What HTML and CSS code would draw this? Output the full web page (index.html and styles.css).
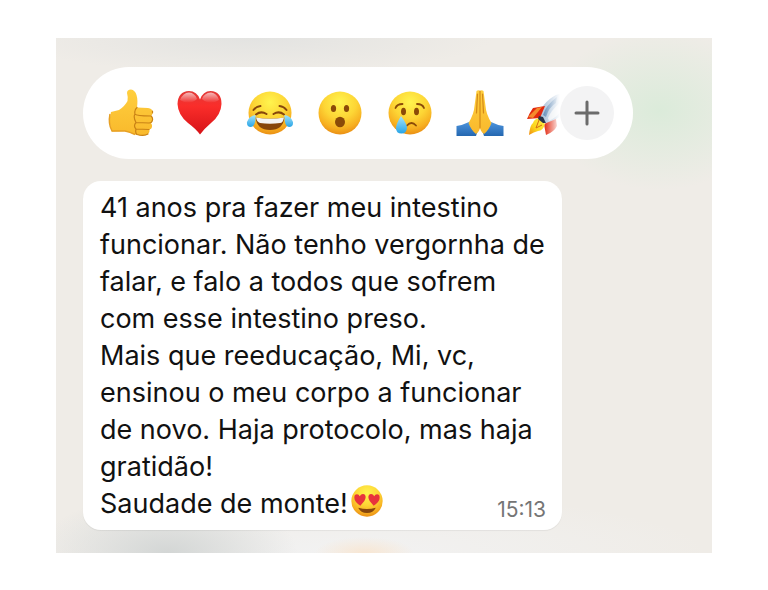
FILE: index.html
```html
<!DOCTYPE html>
<html lang="pt-BR">
<head>
    <meta charset="UTF-8">
    <meta name="viewport" content="width=device-width, initial-scale=1">
    <title>Depoimento</title>
    <link rel="stylesheet" href="styles.css">
</head>
<body>
    <!-- shared gradients -->
    <svg class="defs" width="0" height="0" aria-hidden="true">
        <defs>
            <radialGradient id="face" cx="50%" cy="25%" r="76%">
                <stop offset="0" stop-color="#fff44e"/>
                <stop offset="0.5" stop-color="#fdd535"/>
                <stop offset="0.8" stop-color="#f7b021"/>
                <stop offset="1" stop-color="#e98d14"/>
            </radialGradient>
            <linearGradient id="skin" x1="0" y1="0" x2="0" y2="1">
                <stop offset="0" stop-color="#ffcf3e"/>
                <stop offset="1" stop-color="#f9b92c"/>
            </linearGradient>
            <linearGradient id="red" x1="0" y1="0" x2="0" y2="1">
                <stop offset="0" stop-color="#e23a38"/>
                <stop offset="0.35" stop-color="#fa2d2a"/>
                <stop offset="1" stop-color="#d61318"/>
            </linearGradient>
            <linearGradient id="shine" x1="0" y1="0" x2="0" y2="1">
                <stop offset="0" stop-color="#fff" stop-opacity="0.65"/>
                <stop offset="1" stop-color="#fff" stop-opacity="0"/>
            </linearGradient>
            <linearGradient id="tear" x1="0" y1="0" x2="0" y2="1">
                <stop offset="0" stop-color="#a5e4fb"/>
                <stop offset="1" stop-color="#27a4e6"/>
            </linearGradient>
            <linearGradient id="sleeve" x1="0" y1="0" x2="0" y2="1">
                <stop offset="0" stop-color="#4d94dd"/>
                <stop offset="1" stop-color="#2467b0"/>
            </linearGradient>
            <linearGradient id="flame" x1="1" y1="0" x2="0" y2="1">
                <stop offset="0" stop-color="#fff04a"/>
                <stop offset="0.6" stop-color="#fbd61d"/>
                <stop offset="1" stop-color="#f08a12"/>
            </linearGradient>
        </defs>
    </svg>

    <main class="chat">
        <div class="reactions">
            <div class="reaction-list">
                <button type="button" aria-label="Joinha">
                    <svg viewBox="-2 0 48 48">
                        <path fill="url(#skin)" d="M3 23Q7 22 11 21Q17 17 19.500 12Q20 7 19 4Q19 .5 23 .5Q27 1 28.500 6Q30 11 29 18.500L40 19Q44.500 19.500 44.500 23Q44.500 26 43 27Q45 28.500 44.500 31Q44.500 33 43 34Q44.500 36 44 38Q43.500 40 41.500 40.500Q42 43 40 45Q38 47 33 46.500L27 45.500Q22 43 17 42L4 42.500Q0 34 3 23Z"/>
                        <path fill="none" stroke="#c98216" stroke-width="1.200" stroke-linecap="round" d="M29 18.500Q26 21 27 25Q28 27 43 27M43 27Q45 28.500 44.500 31Q44 34 41 34L28 33.500M27 25Q25 28 28 33.500Q25 37 28 40L41 40.500M28 40Q27 44 29 45.500Q36 47.500 40 45M44.500 22V24"/>
                        <path fill="none" stroke="#e7a025" stroke-width="1.500" d="M2 25Q0 35 4 42L17 42Q22 43 27 45.500"/>
                    </svg>
                </button>
                <button type="button" aria-label="Amei">
                    <svg viewBox="0 0 48 48">
                        <path fill="url(#red)" d="M24 10.500Q27 2 34.500 2Q45.500 2.500 45.500 15Q45 26 35 34Q28 40 24 45.500Q20 40 12 34Q2 26 1.500 15Q2 2.500 13 2Q21 2 24 10.500Z"/>
                        <path fill="url(#shine)" d="M4 11Q7 3.500 13 3.500Q19 4 21 10Q13 17 4 11ZM26 10Q28 4 35 3.500Q41 4 43 11Q34 17 26 10Z"/>
                    </svg>
                </button>
                <button type="button" aria-label="Haha">
                    <svg viewBox="0 0 48 48">
                        <circle cx="24" cy="24" r="21.500" fill="url(#face)"/>
                        <path fill="#87460b" d="M9.500 28.500Q24 31 38.500 28.500Q37 41 24 41Q11 41 9.500 28.500Z"/>
                        <path fill="#f4f4f4" d="M10 28.500Q24 31 38 28.500Q37 34 34 34Q24 35.500 14 34Q11 33 10 28.500Z"/>
                        <path fill="none" stroke="#87460b" stroke-width="2" stroke-linecap="round" d="M10 25.500Q15 21.500 20.500 25M27.500 25Q33 21.500 38 25.500M7.500 21Q10 17.500 14.500 17M33.500 17Q38 17.500 40.500 21"/>
                        <path fill="url(#tear)" d="M9.500 26Q3 27 1 33Q.5 38 5 38Q10 37.500 9.500 26ZM38.500 26Q45 27 47 33Q47.500 38 43 38Q38 37.500 38.500 26Z"/>
                    </svg>
                </button>
                <button type="button" aria-label="Uau">
                    <svg viewBox="0 0 48 48">
                        <circle cx="24" cy="24" r="21.500" fill="url(#face)"/>
                        <g fill="#8b4a08">
                            <ellipse cx="17.500" cy="19.500" rx="2.600" ry="3.500"/>
                            <ellipse cx="30.500" cy="19.500" rx="2.600" ry="3.500"/>
                            <ellipse cx="24" cy="33" rx="5" ry="5.200"/>
                        </g>
                    </svg>
                </button>
                <button type="button" aria-label="Triste">
                    <svg viewBox="0 0 48 48">
                        <circle cx="24" cy="24" r="21.500" fill="url(#face)"/>
                        <g fill="#8b4a08">
                            <ellipse cx="17.500" cy="22.500" rx="2.500" ry="3.800"/>
                            <ellipse cx="30.500" cy="22.500" rx="2.500" ry="3.800"/>
                        </g>
                        <path fill="none" stroke="#8b4a08" stroke-width="1.800" stroke-linecap="round" d="M9.500 19Q11 15 16.500 15M31 15Q36.500 15 38 19M21 36.500Q25.500 31.500 30 36.500"/>
                        <path fill="url(#tear)" d="M15 27Q21 35 21 39Q20.500 44.500 15.500 44.500Q10 44.500 10 39Q10 35 15 27Z"/>
                    </svg>
                </button>
                <button type="button" aria-label="Gratidão">
                    <svg viewBox="0 0 48 48">
                        <path fill="url(#sleeve)" d="M.5 37Q7 36 13 33L22 41L20 47H.5ZM47.500 37Q41 36 35 33L26 41L28 47H47.500Z"/>
                        <path fill="url(#skin)" d="M24 2Q22.500 .5 20.500 2L18.500 17Q18 25 12.500 34Q15 41 20 45Q24 42 24 38Q24 42 28 45Q33 41 35.500 34Q30 25 29.500 17L27.500 2Q25.500 .5 24 2Z"/>
                        <path fill="none" stroke="#d48a18" stroke-width="1.200" stroke-linecap="round" d="M24 2V39M21.500 5L20.500 24M26.500 5L27.500 24"/>
                    </svg>
                </button>
                <button type="button" aria-label="Foguete">
                    <svg viewBox="0 0 48 48">
                        <path fill="#b3c8de" d="M13 28Q15 14 30 6L46 1L42 18Q35 30 20 35Z"/>
                        <path fill="#6d94bd" d="M17 26Q20 16 31 8L30 14Q23 18 20 28Z"/>
                        <path fill="#e9edf1" d="M22 29Q25 21 36 12L35 22Q30 29 23 32Z"/>
                        <path fill="#e2280f" d="M19 17L7 19Q4 23 1 30L14 29ZM30 30L18 35L20 46Q28 43 31 37Z"/>
                        <path fill="#f58a2c" d="M11 19L2 28L7 29L16 18Z"/>
                        <path fill="url(#flame)" d="M13 29L19 35Q17 42 12 42Q8 43 3 46Q4 36 7 34Q8 30 13 29Z"/>
                        <path fill="none" stroke="#d76a12" stroke-width="1" d="M13 31L10 39L16 36"/>
                        <path fill="#293449" d="M13 27L17 28L20 34L17 34L12 30Z"/>
                    </svg>
                </button>
            </div>
            <button type="button" class="more" aria-label="Mais reações">
                <svg viewBox="0 0 26 26">
                    <path d="M13 2V24M2 13H24"/>
                </svg>
            </button>
        </div>

        <article class="message">
            <p>41 anos pra fazer meu intestino funcionar. Não tenho vergornha de falar, e falo a todos que sofrem com esse intestino preso.</p>
            <p>Mais que reeducação, Mi, vc, ensinou o meu corpo a funcionar de novo. Haja protocolo, mas haja gratidão!</p>
            <div class="last-line">
                <p>Saudade de monte!</p>
                <svg class="love" viewBox="0 0 48 48" role="img" aria-label="Apaixonado">
                    <circle cx="24" cy="24" r="23.500" fill="url(#face)"/>
                    <path fill="#e8333c" d="M14 31Q5 25 5 19Q5 14 9 14Q12 14 13 17Q16 12 20 14Q24 17 20 24ZM34 31Q43 25 43 19Q43 14 39 14Q36 14 35 17Q32 12 28 14Q24 17 28 24Z"/>
                    <path fill="#87460b" d="M11 34Q24 38 37 34Q34 42 24 42Q14 42 11 34Z"/>
                </svg>
                <time datetime="15:13">15:13</time>
            </div>
        </article>
    </main>
</body>
</html>
```
FILE: styles.css
```css
* {
    box-sizing: border-box;
}

body {
    margin: 0;
    padding: 38px 56px;
    background: #fff;
    color: #111;
    font-family: Inter, "Liberation Sans", sans-serif;
}

.defs {
    position: absolute;
}

.chat {
    display: flex;
    flex-direction: column;
    align-items: flex-start;
    gap: 22px;
    padding: 29px 27px 23px;
    background:
        radial-gradient(ellipse 110px 80px at 92% 14%, #dbebda, transparent),
        radial-gradient(ellipse 240px 36px at 30% 0, #e3e3e1, transparent),
        radial-gradient(ellipse 50px 16px at 47% 100%, #f8e6d2, transparent),
        radial-gradient(ellipse 130px 60px at 17% 100%, #d3d6d5, transparent),
        radial-gradient(ellipse 360px 60px at 45% 100%, #f2f2f2, transparent),
        #efece7;
}

button {
    padding: 0;
    border: none;
    background: none;
    cursor: pointer;
}

/* reaction bar */
.reactions {
    display: flex;
    align-items: center;
    width: 100%;
    max-width: 550px;
    height: 92px;
    padding: 0 19px 0 23px;
    border-radius: 46px;
    background: #fff;
}

.reaction-list {
    display: flex;
    flex: 1;
    gap: 22px;
    min-width: 0;
    overflow: hidden;
    -webkit-mask-image: linear-gradient(to left, transparent, #000 16px);
    mask-image: linear-gradient(to left, transparent, #000 16px);
}

.reaction-list button {
    flex: none;
    width: 48px;
    height: 48px;
}

.reactions svg {
    display: block;
}

.more {
    display: flex;
    align-items: center;
    justify-content: center;
    flex: none;
    width: 54px;
    height: 54px;
    border-radius: 50%;
    background: #f3f3f4;
}

.more svg {
    width: 26px;
    height: 26px;
    fill: none;
    stroke: #6b6b6b;
    stroke-width: 3;
    stroke-linecap: round;
}

/* message bubble */
.message {
    width: 100%;
    max-width: 479px;
    padding: 8px 16px 8px 17px;
    border-radius: 18px;
    background: #fff;
    box-shadow: 0 1px 1px rgba(0, 0, 0, 0.06);
    font-size: 27px;
    line-height: 37px;
}

.message p {
    margin: 0;
}

.last-line {
    display: flex;
    align-items: flex-start;
}

.love {
    width: 32px;
    height: 32px;
    margin-left: 3px;
}

time {
    align-self: flex-end;
    margin-left: auto;
    color: #757575;
    font-size: 21px;
    line-height: 24px;
}
```
